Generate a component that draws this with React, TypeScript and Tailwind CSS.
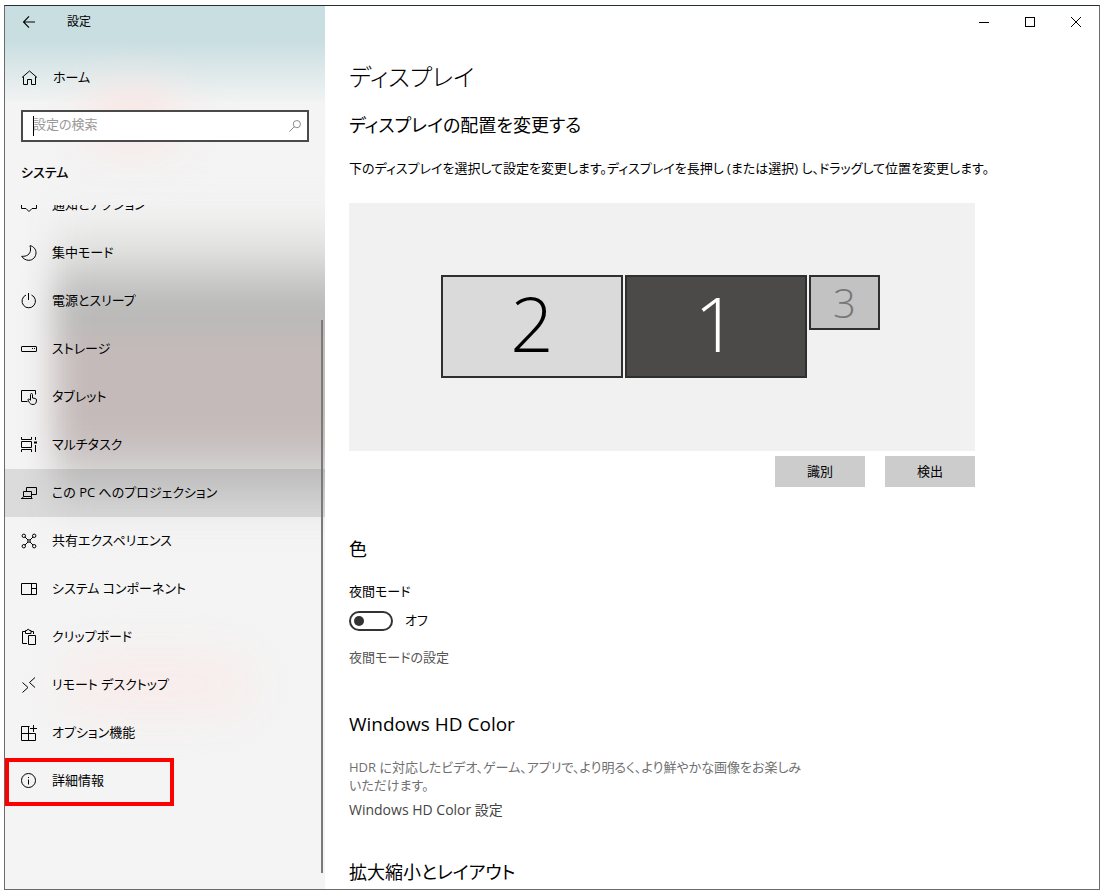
import { FC, ReactNode, useState } from "react";

interface INavItem {
  label: string;
  icon: ReactNode;
  active?: boolean;
  marked?: boolean;
}

interface IIconProps {
  children: ReactNode;
  className?: string;
}

const Icon: FC<IIconProps> = ({ children, className = "h-4 w-4" }) => (
  <svg
    viewBox="0 0 16 16"
    fill="none"
    stroke="currentColor"
    className={`shrink-0 overflow-visible ${className}`}
    aria-hidden="true"
  >
    {children}
  </svg>
);

const navItems: INavItem[] = [
  {
    label: "通知とアクション",
    icon: <path d="M.5 1.500h15v10H11l-3 3-3-3H.5z" />,
  },
  {
    label: "集中モード",
    icon: (
      <path d="M9 .7c3.600.6 6 3.500 6 7.100 0 4.200-3.200 7.500-7.200 7.500-2.900 0-5.700-1.600-7.100-4 5.300.4 8.500-2.200 8.800-6.300C9.600 3.500 9.500 2 9 .7z" />
    ),
  },
  {
    label: "電源とスリープ",
    icon: <path d="M7.500 0v7M5 2a6.700 6.700 0 1 0 5.500 0" />,
  },
  {
    label: "ストレージ",
    icon: (
      <>
        <rect x=".5" y="5.500" width="15" height="5" rx=".5" />
        <path d="M11 7.500h1M13 7.500h1" />
      </>
    ),
  },
  {
    label: "タブレット",
    icon: (
      <>
        <path d="M6.500 12.500h-6v-11h14v4" />
        <path d="M9.500 11V5.500c0-1.300 2-1.300 2 0V9l2.700.5c.8.200 1.300.700 1.300 1.500 0 2.800-1 4.500-3.500 4.500-2 0-3-.9-3.800-2.200L6.800 10.600c.8-.9 1.900-.5 2.700.9" />
      </>
    ),
  },
  {
    label: "マルチタスク",
    icon: (
      <>
        <path d="M.5 0v2.500h10V0M.5 15v-2.500h10V15M.5 4.500h10v6H.5z" />
        <path d="M14.500 0v3M14.500 8v7" />
        <path d="M13 5.500h3" strokeWidth="2" />
      </>
    ),
  },
  {
    label: "この PC へのプロジェクション",
    active: true,
    icon: (
      <>
        <path d="M5.500 6.500v-4h10v7h-5" />
        <path d="M2.500 6.500h8v5h-8zM0 13.500h11.500M2.500 11.500l-1.500 2M10.500 11.500v2" />
      </>
    ),
  },
  {
    label: "共有エクスペリエンス",
    icon: (
      <>
        <circle cx="2.800" cy="2.800" r="1.700" />
        <circle cx="13.200" cy="2.800" r="1.700" />
        <circle cx="2.800" cy="13.200" r="1.700" />
        <circle cx="13.200" cy="13.200" r="1.700" />
        <circle cx="8" cy="8" r="1.300" />
        <path d="M4 4l3 3M12 4L9 7M4 12l3-3M12 12L9 9" />
      </>
    ),
  },
  {
    label: "システム コンポーネント",
    icon: <path d="M.5 2.500h15v11H.5zM10.500 2.500v11M10.500 7.500h5" />,
  },
  {
    label: "クリップボード",
    icon: (
      <>
        <path d="M6 14.500H1.500v-12H4M10 2.500h2.500V5" />
        <path d="M4.500 1.500h1.500a1.200 1.200 0 0 1 2.400 0h1.600v3H4.500z" />
        <path d="M7.500 6.500h7v9h-7z" />
      </>
    ),
  },
  {
    label: "リモート デスクトップ",
    icon: <path d="M1.500 5.500L7 10.500l-5.500 5M14 .500L8.500 5.500 14 10.500" />,
  },
  {
    label: "オプション機能",
    icon: (
      <path d="M8.500 1.500h-8v14h14v-7H.5M7.500 1.500v14M12.500 0v7M9 3.500h7" />
    ),
  },
  {
    label: "詳細情報",
    marked: true,
    icon: (
      <>
        <circle cx="7.500" cy="7.500" r="7" />
        <path d="M7.500 6.500v5M7.500 4v1" />
      </>
    ),
  },
];

const Backdrop: FC = () => (
  <div className="absolute inset-0 overflow-hidden bg-[#f4f4f4]">
    <div className="h-24 bg-linear-to-b from-[#c8dee1] from-35% to-[#f2f3f3]" />
    <div className="absolute left-20 top-20 h-16 w-24 rounded-full bg-[#f8e6e4] blur-xl" />
    <div className="absolute left-12 top-[200px] h-[320px] w-[400px] bg-[linear-gradient(to_bottom,#f4f4f4_0%,#dededd_16%,#bbbcbb_28%,#b8b9b8_36%,#c5baba_43%,#c5baba_72%,#cfcccc_80%,#e2e2e2_90%,#f4f4f4_100%)] blur-lg" />
    <div className="absolute left-14 top-[650px] h-14 w-48 rounded-full bg-[#f8ebea] blur-xl" />
  </div>
);

const NavItem: FC<{ item: INavItem }> = ({ item }) => (
  <li className="relative">
    <a
      href="#"
      className={`flex h-12 items-center gap-[15px] pl-4 text-[13px] ${
        item.active ? "bg-black/10" : ""
      }`}
    >
      <Icon>{item.icon}</Icon>
      <span className="whitespace-nowrap">{item.label}</span>
    </a>
    {item.marked && (
      <div className="pointer-events-none absolute left-0 top-px h-12 w-[169px] border-4 border-[#ff0000]" />
    )}
  </li>
);

const Sidebar: FC = () => (
  <aside className="relative flex w-80 shrink-0 flex-col">
    <Backdrop />
    <div className="relative flex min-h-0 flex-1 flex-col">
      <header className="flex h-8 items-center">
        <button className="flex h-8 w-12 items-center justify-center" aria-label="戻る">
          <Icon className="h-3 w-3">
            <path d="M.5 8H16M8 .500L.700 8 8 15.500" strokeWidth="1.500" />
          </Icon>
        </button>
        <span className="pl-3.5 text-xs">設定</span>
      </header>
      <a href="#" className="mt-4 flex h-12 items-center gap-4 pl-4 text-[13px]">
        <Icon>
          <path d="M1 7.500L8.500 1 16 7.500M2.500 6.500v8h4v-5h4v5h4v-8" />
        </Icon>
        ホーム
      </a>
      <div className="relative mx-4 mt-2 h-8">
        <input
          type="text"
          aria-label="設定の検索"
          placeholder="設定の検索"
          className="h-8 w-full border-2 border-[#4a4a4a] bg-white pb-1 pl-2.5 pr-8 text-[13px] outline-none placeholder:text-[#999999]"
        />
        <span className="absolute left-3 top-1.5 h-5 w-px bg-black" />
        <Icon className="absolute right-2 top-2.5 h-3 w-3 text-[#888888]">
          <circle cx="10.500" cy="5.500" r="4.800" strokeWidth="1.300" />
          <path d="M7 9l-6.500 6.500" strokeWidth="1.300" />
        </Icon>
      </div>
      <h2 className="mt-5 pl-4 text-[13px] leading-5 font-medium">システム</h2>
      <nav className="relative mt-[23px] min-h-0 flex-1 overflow-hidden">
        <ul className="-mt-6">
          {navItems.map((item) => (
            <NavItem key={item.label} item={item} />
          ))}
        </ul>
        <div className="absolute bottom-4 right-0.5 top-[115px] w-0.5 bg-[#7a7a7a]" />
      </nav>
    </div>
  </aside>
);

const WindowControls: FC = () => (
  <div className="flex h-8 justify-end">
    <button className="flex w-[46px] items-center justify-center" aria-label="最小化">
      <svg viewBox="0 0 10 10" className="h-2.5 w-2.5" stroke="currentColor" fill="none">
        <path d="M0 5.500h10" />
      </svg>
    </button>
    <button className="flex w-[46px] items-center justify-center" aria-label="最大化">
      <svg viewBox="0 0 10 10" className="h-2.5 w-2.5" stroke="currentColor" fill="none">
        <rect x=".5" y=".5" width="9" height="9" />
      </svg>
    </button>
    <button className="flex w-[46px] items-center justify-center" aria-label="閉じる">
      <svg viewBox="0 0 10 10" className="h-2.5 w-2.5" stroke="currentColor" fill="none">
        <path d="M0 0l10 10M10 0L0 10" />
      </svg>
    </button>
  </div>
);

const DisplayArrangement: FC = () => (
  <div className="flex h-[248px] items-start gap-0.5 bg-[#f1f1f1] pl-[92px] pt-[72px] font-light">
    <button className="h-[103px] w-[182px] border-2 border-[#2f2f2f] bg-[#dadada] pb-2 text-[76px] leading-none">
      2
    </button>
    <button className="h-[103px] w-[182px] border-2 border-[#2f2f2f] bg-[#4b4a48] pb-2 text-[76px] leading-none text-white">
      1
    </button>
    <button className="h-[55px] w-[71px] border-2 border-[#2f2f2f] bg-[#c2c2c2] text-[40px] leading-none text-[#777777]">
      3
    </button>
  </div>
);

const App: FC = () => {
  const [nightLight, setNightLight] = useState<boolean>(false);
  return (
    <div className="h-screen bg-white py-[5px] pl-1 pr-[3px] font-['Open_Sans','Noto_Sans_CJK_JP',sans-serif] text-black [font-feature-settings:'palt']">
      <div className="flex h-full overflow-hidden border border-[#6b6b6b] border-t-[#23302f] bg-white">
        <Sidebar />
        <main className="min-w-0 flex-1">
          <WindowControls />
          <div className="max-w-[650px] pl-6">
            <h1 className="mt-5 text-2xl leading-[38px] font-light">ディスプレイ</h1>
            <h2 className="mt-[13px] text-lg leading-8">ディスプレイの配置を変更する</h2>
            <p className="mt-[17px] mb-[25px] whitespace-nowrap text-[13px] leading-5">
              下のディスプレイを選択して設定を変更します。ディスプレイを長押し (または選択) し、ドラッグして位置を変更します。
            </p>
            <DisplayArrangement />
            <div className="mt-[5px] flex justify-end gap-5 text-[13px]">
              <button className="h-[31px] w-[90px] bg-[#cccccc]">識別</button>
              <button className="h-[31px] w-[90px] bg-[#cccccc]">検出</button>
            </div>

            <h2 className="mt-[46px] text-lg leading-8">色</h2>
            <label htmlFor="night" className="mt-4 block text-[13px] leading-5">
              夜間モード
            </label>
            <div className="mt-2.5 flex h-5 items-center gap-3 text-[13px]">
              <input
                id="night"
                type="checkbox"
                role="switch"
                checked={nightLight}
                onChange={() => setNightLight(!nightLight)}
                className="flex h-5 w-11 appearance-none items-center rounded-full border-2 border-[#333333] px-[3px] before:h-2.5 before:w-2.5 before:rounded-full before:bg-[#333333] checked:justify-end"
              />
              <span>{nightLight ? "オン" : "オフ"}</span>
            </div>
            <a href="#" className="mt-4 block text-[13px] leading-5 text-[#555555]">
              夜間モードの設定
            </a>

            <h2 className="mt-[41px] text-[19px] leading-8">Windows HD Color</h2>
            <p className="mt-[18px] text-[13px] leading-[18px] text-[#707070]">
              HDR に対応したビデオ、ゲーム、アプリで、より明るく、より鮮やかな画像をお楽しみ
              <br />
              いただけます。
            </p>
            <a href="#" className="mt-1.5 block text-sm leading-5 text-[#444444]">
              Windows HD Color 設定
            </a>

            <h2 className="mt-9 text-lg leading-8">拡大縮小とレイアウト</h2>
          </div>
        </main>
      </div>
    </div>
  );
};

export default App;
